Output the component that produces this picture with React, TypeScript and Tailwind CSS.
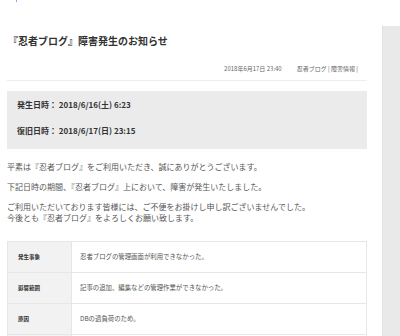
import React from "react";

// Outage notice rows
const rows = [
  { label: "発生事象", text: "忍者ブログの管理画面が利用できなかった。" },
  { label: "影響範囲", text: "記事の追加、編集などの管理作業ができなかった。" },
  { label: "原因", text: "DBの過負荷のため。" },
  { label: "", text: "" },
];

export default function App() {
  return (
    <div className="relative h-[336px] w-[400px] overflow-hidden bg-white font-['Noto_Sans_CJK_JP','Noto_Sans',sans-serif] text-[#333]">
      <span className="absolute left-[16px] top-0 h-[2px] w-[1px] bg-[#9aa0ff]" />
      <div className="flex">
        <main className="ml-[7px] w-[360px] shrink-0">
          <h1 className="pl-[1px] pt-[34px] text-[10px] font-bold leading-[14px] text-[#333]">
            『忍者ブログ』障害発生のお知らせ
          </h1>
          <div className="mt-[16px] flex justify-end gap-[15px] pr-[9px] text-[6px] leading-[10px] text-[#666]">
            <span>2018年6月17日 23:40</span>
            <span>忍者ブログ | 障害情報 |</span>
          </div>
          <div className="mt-[6px] border-t border-[#ededed]" />

          <div className="mt-[10px] bg-[#ebebeb] pb-[12px] pl-[10px] pt-[8px] text-[8px] font-bold leading-[12px] text-[#333]">
            <p>
              発生日時：&nbsp;2018/6/16(土) 6:23
            </p>
            <p className="mt-[14px]">
              復旧日時：&nbsp;2018/6/17(日) 23:15
            </p>
          </div>

          <div className="mt-[12px] text-[8px] leading-[11px] text-[#555]">
            <p>平素は『忍者ブログ』をご利用いただき、誠にありがとうございます。</p>
            <p className="mt-[9px]">下記日時の期間、『忍者ブログ』上において、障害が発生いたしました。</p>
            <p className="mt-[9px]">
              ご利用いただいております皆様には、ご不便をお掛けし申し訳ございませんでした。
              <br />
              今後とも『忍者ブログ』をよろしくお願い致します。
            </p>
          </div>

          <table className="mt-[18px] w-full border-collapse border border-[#e6e6e6]">
            <tbody>
              {rows.map((row, i) => (
                <tr key={i} className="h-[31px] border-b border-[#e6e6e6]">
                  <th className="w-[64px] border-r border-[#e6e6e6] bg-[#f2f2f2] pl-[10px] text-left align-middle text-[5.5px] font-bold text-[#333]">
                    {row.label}
                  </th>
                  <td className="pl-[8px] align-middle text-[6.4px] text-[#555]">{row.text}</td>
                </tr>
              ))}
            </tbody>
          </table>
        </main>
        <aside className="ml-[15px] mt-[26px] h-[320px] flex-1 border-l border-[#e0e0e0] bg-[#e9e9e9]" />
      </div>
    </div>
  );
}
